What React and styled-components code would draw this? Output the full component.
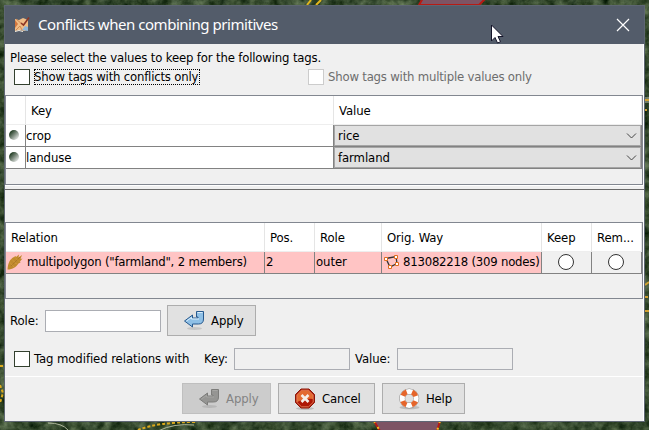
import React from "react";
import styled, { createGlobalStyle } from "styled-components";

const Global = createGlobalStyle`
  body { margin: 0; overflow: hidden; }
  * { box-sizing: border-box; }
`;

const Desktop = styled.div`
  position: relative;
  width: 649px;
  height: 430px;
  padding: 5px 4px 8px;
  overflow: hidden;
  background: #2c4227;
`;
const Imagery = styled.svg`
  position: absolute;
  inset: 0;
`;
const Dialog = styled.div`
  position: relative;
  width: 641px;
  height: 417px;
  display: flex;
  flex-direction: column;
  border: 1px solid #5e6673;
  background: #f0f0f0;
  color: #000;
  font: 13px/16px "DejaVu Sans Condensed", "DejaVu Sans", sans-serif;
  font-stretch: condensed;
`;
const TitleBar = styled.header`
  flex: none;
  height: 38px;
  display: flex;
  align-items: center;
  padding: 0 14px 1px 9px;
  background: #535c6a;
  color: #fff;
  font: 15px/20px "Noto Sans", sans-serif;
  svg { flex: none; }
`;
const Title = styled.h1`
  flex: 1;
  margin: 0 0 2px 8px;
  font: inherit;
  letter-spacing: -0.46px;
`;
const Body = styled.main`
  flex: 1;
  display: flex;
  flex-direction: column;
  box-shadow: inset -1px 0 #fff;
`;
const Label = styled.span`
  white-space: pre;
  letter-spacing: ${(p) => p.$spacing ?? -0.08}px;
  color: ${(p) => (p.$muted ? "#6d6d6d" : "inherit")};
`;
const Intro = styled.div`
  height: 25px;
  padding: 6px 5px 0;
`;
const Filters = styled.div`
  display: grid;
  grid-template-columns: 294px 1fr;
  height: 26px;
  padding-left: 9px;
`;
const Option = styled.label`
  display: flex;
  align-items: center;
  height: 16px;
  gap: 4px;
`;
const Box = styled.span`
  flex: none;
  width: 16px;
  height: 16px;
  border: 1px solid ${(p) => (p.$disabled ? "#ccc" : "#33402e")};
  background: #fff;
`;
const Focus = styled.span`
  display: flex;
  align-items: center;
  width: 166px;
  height: 16px;
  border: 1px dotted #000;
  ${Label} { margin-left: -1px; }
`;
const Table = styled.div`
  width: 638px;
  height: ${(p) => p.$height}px;
  border: 1px solid #828790;
  background: #f0f0f0;
`;
const Row = styled.div`
  display: grid;
  grid-template-columns: ${(p) => p.$columns};
  height: ${(p) => p.$height || 22}px;
`;
const Head = styled.div`
  display: flex;
  align-items: center;
  padding: 2px 0 0 5px;
  border-right: 1px solid #e5e5e5;
  border-bottom: 1px solid #eee;
  background: #fff;
`;
const Cell = styled.div`
  display: flex;
  align-items: center;
  justify-content: ${(p) => (p.$center ? "center" : "flex-start")};
  gap: ${(p) => p.$gap ?? 4}px;
  padding: 0 ${(p) => (p.$center ? 2 : 0)}px ${(p) => p.$lift || 0}px ${(p) => p.$pad ?? 1}px;
  border-right: ${(p) => (p.$open ? 0 : 1)}px solid #828282;
  border-bottom: 1px solid #828282;
  background: ${(p) => (p.$conflict ? "#ffc4c4" : p.$center ? "#f0f0f0" : "#fff")};
`;
const Dot = styled.span`
  width: 10px;
  height: 10px;
  margin-bottom: 1px;
  border-radius: 50%;
  background: linear-gradient(135deg, #1e3a20 15%, #7d8b7e 50%, #eef0ee 90%);
`;
const ComboCell = styled.div`
  display: grid;
  margin-left: -1px;
  border-left: 1px solid #828282;
  border-right: 1px solid #828282;
  border-bottom: 1px solid #828282;
`;
const Combo = styled.div`
  display: flex;
  align-items: center;
  justify-content: space-between;
  padding: 0 3px;
  border: 1px solid #a5a5a5;
  background: #e1e1e1;
`;
const Radio = styled.span`
  width: 16px;
  height: 16px;
  border: 1px solid #333;
  border-radius: 50%;
  background: #fff;
`;
const Divider = styled.div`
  height: 5px;
  border-top: 1px solid #fff;
  border-bottom: 1px solid #696969;
  background: #f0f0f0;
`;
const Gap = styled.div`
  height: 32px;
`;
const FormRow = styled.div`
  display: flex;
  align-items: center;
  height: ${(p) => p.$height}px;
  margin-top: ${(p) => p.$top}px;
  padding-left: ${(p) => p.$left}px;
`;
const Caption = styled.span`
  flex: none;
  width: ${(p) => p.$width}px;
  white-space: pre;
  letter-spacing: -0.08px;
`;
const Field = styled.span`
  flex: none;
  width: 116px;
  height: 22px;
  margin-right: ${(p) => p.$after || 0}px;
  border: 1px solid #abadb3;
  background: ${(p) => (p.$disabled ? "#f0f0f0" : "#fff")};
`;
const Button = styled.button`
  display: flex;
  align-items: center;
  width: ${(p) => p.$width}px;
  height: 31px;
  padding: 0 0 0 15px;
  gap: 4px;
  border: 1px solid ${(p) => (p.disabled ? "#bfbfbf" : "#adadad")};
  background: ${(p) => (p.disabled ? "#ccc" : "#e1e1e1")};
  color: ${(p) => (p.disabled ? "#838383" : "#000")};
  font: inherit;
`;
const Footer = styled.footer`
  display: flex;
  gap: 7px;
  height: 43px;
  margin-top: 6px;
  padding: 6px 0 0 177px;
  border-top: 1px solid #fff;
`;
const Pointer = styled.svg`
  position: absolute;
  left: 490px;
  top: 24px;
`;

function MapImagery() {
  return (
    <Imagery width="649" height="430" viewBox="0 0 649 430">
      <defs>
        <filter id="ground" x="0" y="0" width="100%" height="100%" colorInterpolationFilters="sRGB">
          <feTurbulence type="fractalNoise" baseFrequency="0.1" numOctaves="4" seed="8" />
          <feColorMatrix values="0.5 0.1 0 0 -0.09  0.5 0.1 0 0 -0.01  0.45 0.05 0 0 -0.07  0 0 0 0 1" />
        </filter>
      </defs>
      <rect width="649" height="430" filter="url(#ground)" />
      <g fill="none">
        <path d="M307 5l4-5M316 5l5-5" stroke="#e3b61d" strokeWidth="2" />
        <path d="M419 5l4-7h63l-7 7z" fill="#7d5464" stroke="#b81a14" strokeWidth="2" />
        <path d="M0 366h4M0 385l3 8-3 10" stroke="#dca91d" strokeWidth="2" strokeDasharray="3 2" />
        <path d="M138 430q20-8 58-8" stroke="#dca91d" strokeWidth="2" strokeDasharray="3 2" />
        <path d="M158 431q16-8 36-6M48 423q14 0 20 7" stroke="#adb59b" />
        <path d="M374 421l6 10h57l3-10z" fill="#7d5464" stroke="#b81a14" strokeWidth="2" />
        <path d="M374 421l6 10M440 421l-3 10" stroke="#f0c020" strokeWidth="2" strokeDasharray="2 5" />
        <path d="M645 98h4M645 102h4" stroke="#b9bfae" />
        <path d="M645 100h4M645 110h2M645 285l4-3M645 297h3M645 311h4" stroke="#d0a033" strokeWidth="2" />
      </g>
    </Imagery>
  );
}

const AppIcon = () => (
  <svg width="16" height="16" viewBox="0 0 16 16">
    <path d="M1 2l4 1 4-2 5 2v10l-4 1-4-1-5 1z" fill="#f0bd86" />
    <path d="M1 3l3 4-3 4z" fill="#d3763e" />
    <path d="M8 13l3-4 3 1v4z" fill="#8fb6d8" />
    <path d="M2 13l4-4 2 4M2 2l6 5" stroke="#cf8a55" strokeWidth="1" fill="none" />
    <path d="M15 0.500L9.500 8 7 6" stroke="#8c3524" strokeWidth="1.600" fill="none" />
    <path d="M1 14.500l4-1 4 1" stroke="#f6efe4" fill="none" />
  </svg>
);
const Close = () => (
  <svg width="14" height="14" viewBox="0 0 14 14">
    <path d="M1 1l12 12M13 1L1 13" stroke="#fff" strokeWidth="1.2" />
  </svg>
);
const Chevron = () => (
  <svg width="11" height="6" viewBox="0 0 11 6">
    <path d="M1 .5l4.500 4.500L10 .5" fill="none" stroke="#444" />
  </svg>
);
const Wheat = () => (
  <svg width="16" height="16" viewBox="0 0 16 16">
    <path d="M0.500 15.500C1 9 3 5 7 3l1.500-1 .5 1 3-2.500-.5 3L15 1l-1.500 4 2-.5-2.500 3 .5 1-2 1C9 13 6 15.500.5 15.500z" fill="#c08a2c" />
    <path d="M4 12L13 3" stroke="#a87424" strokeWidth=".8" />
    <path d="M3 8.500l4 4.500M5 5.500l5 5M8 3.500l4 4" stroke="#d9a040" strokeDasharray="1.500 1" />
  </svg>
);
const ClosedWay = () => (
  <svg width="16" height="16" viewBox="0 0 16 16">
    <path d="M3 4.500L13 2.500l1 7-7 3.500z" fill="none" stroke="#333" strokeWidth="1.300" />
    <g fill="#fff" stroke="#e06c1c">
      <path d="M1.500 3.500h3v3h-3zM11.500 1.500h3v3h-3zM12.500 8.500h3v3h-3zM5.500 11.500h3v3h-3z" />
    </g>
  </svg>
);
const Return = ({ disabled }) => (
  <svg width="24" height="24" viewBox="0 0 24 24">
    <ellipse cx="11.500" cy="19.500" rx="7.500" ry="1.500" fill="#777" opacity=".25" />
    <path
      d="M1.500 12L9.500 6v3H15V8h-1.500V2.500h7V10q0 5-5 5h-6v3z"
      fill={disabled ? "#959593" : "#8fc0e6"}
      stroke={disabled ? "#7c7c7a" : "#27598e"}
    />
    <path d="M3.500 12l5-3.500V10h7.500M14.500 3.500h5" fill="none" stroke={disabled ? "#a5a5a3" : "#dceefb"} />
  </svg>
);
const Stop = () => (
  <svg width="24" height="24" viewBox="0 0 24 24">
    <ellipse cx="11" cy="21.500" rx="9" ry="1.500" fill="#777" opacity=".35" />
    <path d="M7 2h8l5.500 5.500v8L15 21H7l-5.500-5.500v-8z" fill="#ae1706" stroke="#8a1608" />
    <path d="M7.500 3.500h7L19 8v4q-8-1-16 3V8z" fill="#e36a31" />
    <path d="M7.500 3.200h7L19.200 8v7.200L14.500 19.800h-7L2.800 15.200V8z" fill="none" stroke="#ee9a70" strokeWidth=".7" />
    <path d="M7.500 8l7 7M14.500 8l-7 7" stroke="#f5eee9" strokeWidth="2.600" />
  </svg>
);
const Lifebuoy = () => (
  <svg width="24" height="24" viewBox="0 0 24 24">
    <ellipse cx="11.500" cy="20.500" rx="10" ry="1.700" fill="#777" opacity=".35" />
    <circle cx="11.200" cy="11.500" r="7" fill="none" stroke="#8f8f8f" strokeWidth="6" />
    <circle cx="11.200" cy="11.500" r="7" fill="none" stroke="#fff" strokeWidth="5" />
    <circle cx="11.200" cy="11.500" r="7" fill="none" stroke="#e5652b" strokeWidth="5" strokeDasharray="5.498 5.498" strokeDashoffset="-2.749" />
  </svg>
);

const tags = [["crop", "rice"], ["landuse", "farmland"]];
const tagColumns = "20px 308px 308px";
const relationColumns = "259px 50px 67px 160px 50px 50px";
const relationHeads = ["Relation", "Pos.", "Role", "Orig. Way", "Keep", "Rem..."];

export default function App() {
  return (
    <Desktop>
      <Global />
      <MapImagery />
      <Dialog>
        <TitleBar>
          <AppIcon />
          <Title>Conflicts when combining primitives</Title>
          <Close />
        </TitleBar>
        <Body>
          <Intro>
            <Label $spacing={-0.16}>Please select the values to keep for the following tags.</Label>
          </Intro>
          <Filters>
            <Option><Box /><Focus><Label $spacing={-0.2}>Show tags with conflicts only</Label></Focus></Option>
            <Option><Box $disabled /><Label $muted $spacing={-0.2}>Show tags with multiple values only</Label></Option>
          </Filters>
          <Table $height={90}>
            <Row $columns={tagColumns} $height={29}>
              <Head />
              <Head><Label>Key</Label></Head>
              <Head><Label>Value</Label></Head>
            </Row>
            {tags.map(([key, value]) => (
              <Row key={key} $columns={tagColumns}>
                <Cell $pad={3}><Dot /></Cell>
                <Cell $open $pad={0}><Label>{key}</Label></Cell>
                <ComboCell><Combo><Label>{value}</Label><Chevron /></Combo></ComboCell>
              </Row>
            ))}
          </Table>
          <Divider />
          <Gap />
          <Table $height={77}>
            <Row $columns={relationColumns} $height={29}>
              {relationHeads.map((name) => <Head key={name}><Label>{name}</Label></Head>)}
            </Row>
            <Row $columns={relationColumns}>
              <Cell $conflict $lift={1}><Wheat /><Label $spacing={-0.19}>multipolygon ("farmland", 2 members)</Label></Cell>
              <Cell $conflict $lift={1}><Label>2</Label></Cell>
              <Cell $conflict $lift={1}><Label>outer</Label></Cell>
              <Cell $conflict $lift={1}><ClosedWay /><Label $spacing={-0.22}>813082218 (309 nodes)</Label></Cell>
              <Cell $center $lift={1} $pad={0}><Radio /></Cell>
              <Cell $center $lift={1} $pad={0}><Radio /></Cell>
            </Row>
          </Table>
          <FormRow $height={31} $top={6} $left={5}>
            <Caption $width={35}>Role:</Caption>
            <Field $after={6} />
            <Button $width={89}><Return /><Label>Apply</Label></Button>
          </FormRow>
          <FormRow $height={22} $top={12} $left={9}>
            <Option><Box /><Caption $width={170}>Tag modified relations with</Caption></Option>
            <Caption $width={30}>Key:</Caption>
            <Field $disabled $after={5} />
            <Caption $width={42}>Value:</Caption>
            <Field $disabled />
          </FormRow>
          <Footer>
            <Button $width={89} disabled><Return disabled /><Label>Apply</Label></Button>
            <Button $width={97}><Stop /><Label $spacing={-0.2}>Cancel</Label></Button>
            <Button $width={83}><Lifebuoy /><Label $spacing={-0.2}>Help</Label></Button>
          </Footer>
        </Body>
      </Dialog>
      <Pointer width="14" height="20" viewBox="0 0 14 20">
        <path d="M1.500 1v16l3.500-3.500 2.500 5.500 3-1.300-2.500-5.200h5z" fill="#fff" stroke="#15152a" />
      </Pointer>
    </Desktop>
  );
}
